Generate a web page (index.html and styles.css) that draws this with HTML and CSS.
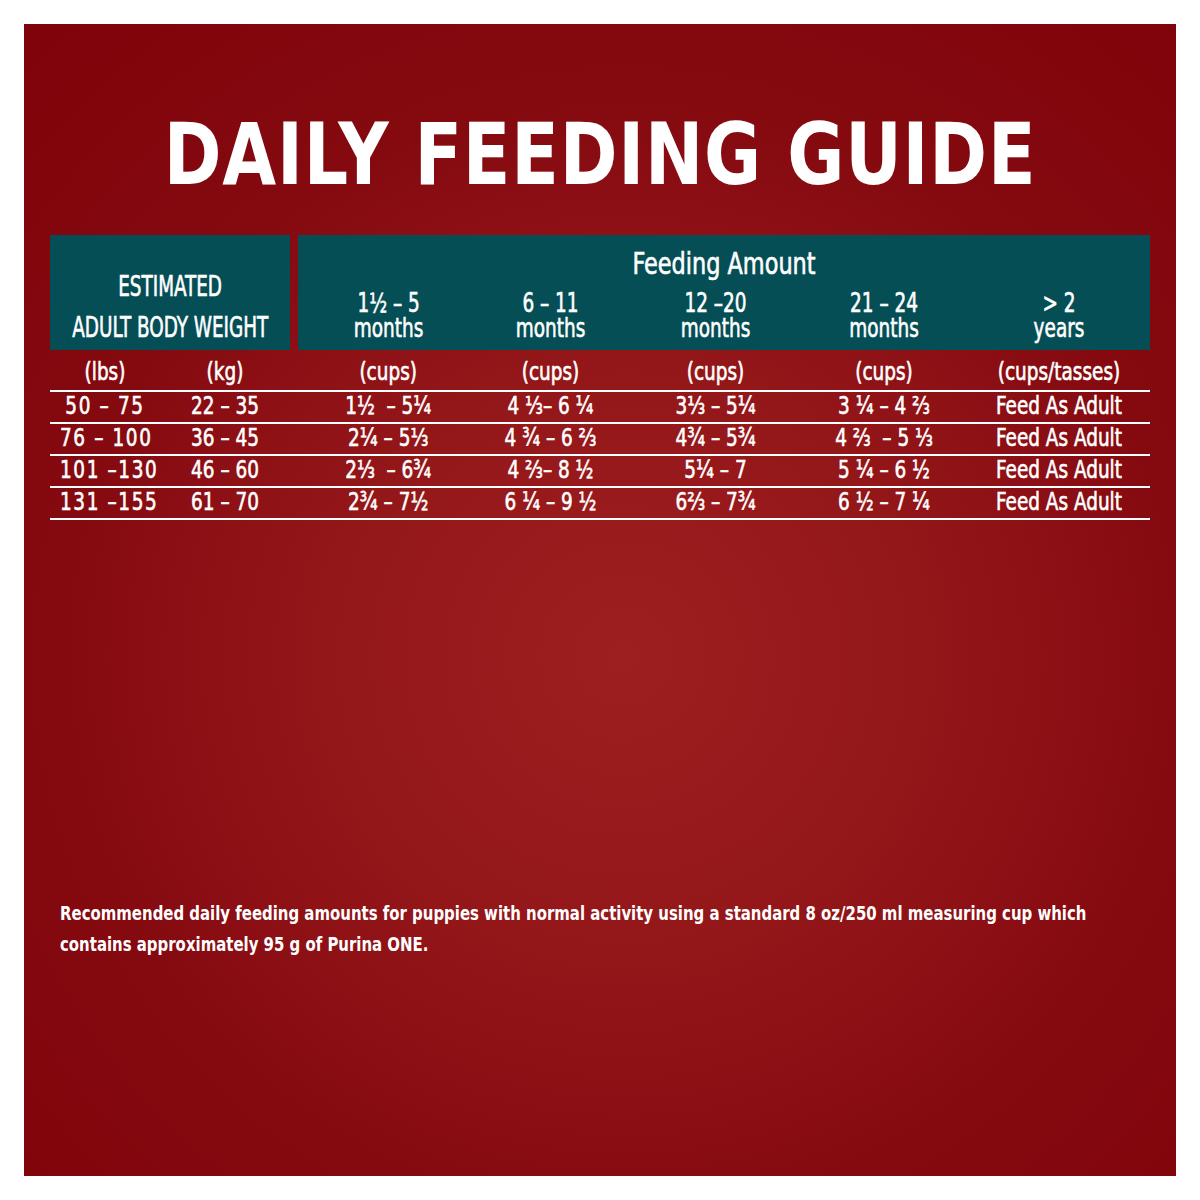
FILE: index.html
```html
<!DOCTYPE html>
<html lang="en">
<head>
<meta charset="utf-8">
<title>Daily Feeding Guide</title>
<link rel="stylesheet" href="styles.css">
</head>
<body>
<main class="panel">
  <h1 class="title">DAILY FEEDING GUIDE</h1>
  <section class="guide">
    <div class="head">
      <div class="head-weight">
        <span>ESTIMATED</span>
        <span>ADULT BODY WEIGHT</span>
      </div>
      <div class="head-amount">
        <div class="amount-title">Feeding Amount</div>
        <div class="ages">
          <div class="age first">1½ – 5<br>months</div>
          <div class="age">6 – 11<br>months</div>
          <div class="age">12 –20<br>months</div>
          <div class="age">21 – 24<br>months</div>
          <div class="age">&gt; 2<br>years</div>
        </div>
      </div>
    </div>
    <div class="row units">
      <div>(lbs)</div><div>(kg)</div><div class="first">(cups)</div><div>(cups)</div><div>(cups)</div><div>(cups)</div><div>(cups/tasses)</div>
    </div>
    <div class="row">
      <div class="wide">50 – 75</div><div>22 – 35</div><div class="first">1½ &nbsp;– 5¼</div><div>4 ⅓– 6 ¼</div><div>3⅓ – 5¼</div><div>3 ¼ – 4 ⅔</div><div>Feed As Adult</div>
    </div>
    <div class="row">
      <div class="wide">76 – 100</div><div>36 – 45</div><div class="first">2¼ – 5⅓</div><div>4 ¾ – 6 ⅔</div><div>4¾ – 5¾</div><div>4 ⅔ &nbsp;– 5 ⅓</div><div>Feed As Adult</div>
    </div>
    <div class="row">
      <div class="wide">101 –130</div><div>46 – 60</div><div class="first">2⅓ &nbsp;– 6¾</div><div>4 ⅔– 8 ½</div><div>5¼ – 7</div><div>5 ¼ – 6 ½</div><div>Feed As Adult</div>
    </div>
    <div class="row">
      <div class="wide">131 –155</div><div>61 – 70</div><div class="first">2¾ – 7½</div><div>6 ¼ – 9 ½</div><div>6⅔ – 7¾</div><div>6 ½ – 7 ¼</div><div>Feed As Adult</div>
    </div>
  </section>
  <p class="note">Recommended daily feeding amounts for puppies with normal activity using a standard 8 oz/250 ml measuring cup which<br>contains approximately 95 g of Purina ONE.</p>
</main>
</body>
</html>
```
FILE: styles.css
```css
* { box-sizing: border-box; }
html, body { margin: 0; padding: 0; background: #ffffff; }
body {
  font-family: "DejaVu Sans Condensed", "DejaVu Sans", sans-serif;
  color: #ffffff;
}
.panel {
  margin: 24px;
  width: 1152px;
  height: 1152px;
  background: radial-gradient(ellipse 75% 75% at 52% 55%, #9e1f1f 0%, #931619 35%, #850a10 65%, #80020a 100%);
  padding: 0 0 0 26px;
  display: flex;
  flex-direction: column;
}
.title {
  margin: 80px 0 0 -26px;
  height: 131px;
  font-family: "DejaVu Sans", sans-serif;
  font-weight: 700;
  font-size: 86px;
  line-height: 100px;
  letter-spacing: 1px;
  text-align: center;
  white-space: nowrap;
  transform: scaleX(0.81);
}
.guide { width: 1100px; -webkit-text-stroke: 0.6px #ffffff; }
.head {
  display: grid;
  grid-template-columns: 240px 852px;
  gap: 8px;
  height: 115px;
}
.head-weight, .head-amount { background: #054e55; overflow: hidden; }
.head-weight {
  display: flex;
  flex-direction: column;
  align-items: center;
  padding-top: 31px;
  font-size: 28px;
  line-height: 41px;
  white-space: nowrap;
}
.head-weight span { display: block; transform: scaleX(0.73); }
.amount-title {
  text-align: center;
  font-size: 30px;
  line-height: 30px;
  padding-top: 14px;
  white-space: nowrap;
  transform: scaleX(0.83);
}
.ages {
  display: grid;
  grid-template-columns: 172px 161px 169px 168px 182px;
  margin-top: 11px;
  font-size: 27px;
  line-height: 25px;
  text-align: center;
  white-space: nowrap;
}
.age { transform: scaleX(0.76); }
.age.first { padding-left: 12px; }
.row {
  display: grid;
  grid-template-columns: 110px 130px 180px 161px 169px 168px 182px;
  height: 32px;
  border-bottom: 2px solid #ffffff;
  font-size: 25px;
  line-height: 28px;
  text-align: center;
  white-space: nowrap;
}
.row > div { transform: scaleX(0.82); }
.row .first { padding-left: 20px; }
.row .wide { letter-spacing: 2px; }
.row.units { height: 42px; line-height: 44px; }
.note {
  margin: 378px 0 0 10px;
  font-weight: 700;
  font-size: 20px;
  line-height: 31px;
  white-space: nowrap;
  transform: scaleX(0.83);
  transform-origin: left center;
}
```
